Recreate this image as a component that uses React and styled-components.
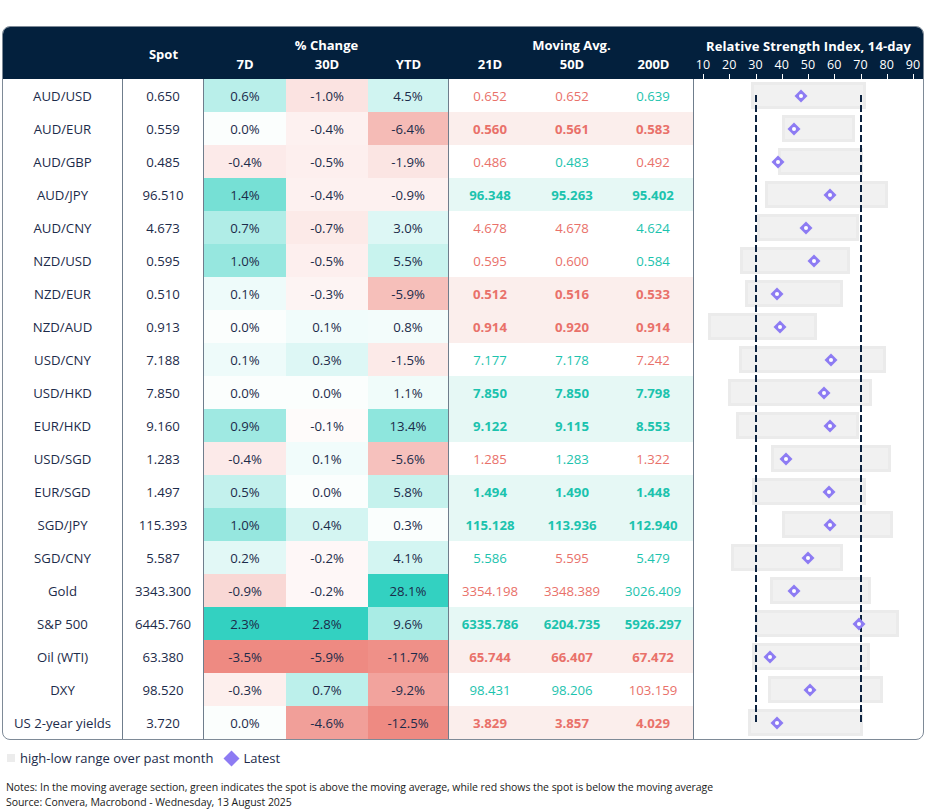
import styled, { createGlobalStyle } from 'styled-components';

const GlobalStyle = createGlobalStyle`
  * { box-sizing: border-box; }
  body {
    margin: 0;
    background: #fff;
    font-family: "Open Sans", "Noto Sans", sans-serif;
    color: #1c2b4a;
  }
`;

const COLS = [120, 81, 82, 82, 81, 82, 82, 81];
const RSI_W = 230;
const ROW_H = 33;
const rsiX = v => 9 + (v - 10) * 2.625;

const rows = [
  ['AUD/USD', '0.650', [0.6, -1.0, 4.5], ['0.652', '0.652', '0.639'], 'rrg', [28.3, 72.1, 47.3]],
  ['AUD/EUR', '0.559', [0.0, -0.4, -6.4], ['0.560', '0.561', '0.583'], 'rrr', [40.1, 67.9, 44.7]],
  ['AUD/GBP', '0.485', [-0.4, -0.5, -1.9], ['0.486', '0.483', '0.492'], 'rgr', [38.6, 71.0, 38.6]],
  ['AUD/JPY', '96.510', [1.4, -0.4, -0.9], ['96.348', '95.263', '95.402'], 'ggg', [33.6, 80.5, 58.4]],
  ['AUD/CNY', '4.673', [0.7, -0.7, 3.0], ['4.678', '4.678', '4.624'], 'rrg', [30.6, 69.4, 49.2]],
  ['NZD/USD', '0.595', [1.0, -0.5, 5.5], ['0.595', '0.600', '0.584'], 'rrg', [24.1, 66.0, 52.3]],
  ['NZD/EUR', '0.510', [0.1, -0.3, -5.9], ['0.512', '0.516', '0.533'], 'rrr', [26.0, 63.3, 38.2]],
  ['NZD/AUD', '0.913', [0.0, 0.1, 0.8], ['0.914', '0.920', '0.914'], 'rrr', [11.9, 53.4, 39.3]],
  ['USD/CNY', '7.188', [0.1, 0.3, -1.5], ['7.177', '7.178', '7.242'], 'ggr', [23.7, 79.7, 58.8]],
  ['USD/HKD', '7.850', [0.0, 0.0, 1.1], ['7.850', '7.850', '7.798'], 'ggg', [19.5, 74.4, 56.1]],
  ['EUR/HKD', '9.160', [0.9, -0.1, 13.4], ['9.122', '9.115', '8.553'], 'ggg', [22.6, 69.4, 58.4]],
  ['USD/SGD', '1.283', [-0.4, 0.1, -5.6], ['1.285', '1.283', '1.322'], 'rgr', [35.9, 81.6, 41.6]],
  ['EUR/SGD', '1.497', [0.5, 0.0, 5.8], ['1.494', '1.490', '1.448'], 'ggg', [28.7, 72.1, 58.0]],
  ['SGD/JPY', '115.393', [1.0, 0.4, 0.3], ['115.128', '113.936', '112.940'], 'ggg', [40.1, 82.4, 58.4]],
  ['SGD/CNY', '5.587', [0.2, -0.2, 4.1], ['5.586', '5.595', '5.479'], 'grg', [20.7, 63.3, 50.0]],
  ['Gold', '3343.300', [-0.9, -0.2, 28.1], ['3354.198', '3348.389', '3026.409'], 'rrg', [35.5, 74.0, 44.7]],
  ['S&P 500', '6445.760', [2.3, 2.8, 9.6], ['6335.786', '6204.735', '5926.297'], 'ggg', [29.8, 84.7, 69.4]],
  ['Oil (WTI)', '63.380', [-3.5, -5.9, -11.7], ['65.744', '66.407', '67.472'], 'rrr', [28.7, 73.6, 35.5]],
  ['DXY', '98.520', [-0.3, 0.7, -9.2], ['98.431', '98.206', '103.159'], 'ggr', [34.8, 78.6, 50.8]],
  ['US 2-year yields', '3.720', [0.0, -4.6, -12.5], ['3.829', '3.857', '4.029'], 'rrr', [27.1, 71.0, 38.2]],
];

// heat map scale per change column
const limits = [0, 1, 2].map(i => ({
  pos: Math.max(...rows.map(r => r[2][i])),
  neg: Math.min(...rows.map(r => r[2][i])),
}));

const mix = (rgb, t) =>
  `rgb(${rgb.map(c => Math.round(255 - (255 - c) * t)).join(',')})`;

const heat = (v, i) => {
  if (v === 0) return '#fbfefd';
  if (v > 0) return mix([51, 209, 193], Math.pow(v / limits[i].pos, 0.8));
  return mix([238, 138, 130], Math.pow(v / limits[i].neg, 0.8));
};

const Page = styled.div`
  padding: 26px 0 0 2px;
`;

const Card = styled.div`
  width: 922px;
  border: 1px solid #7e8a97;
  border-radius: 8px;
  overflow: hidden;
  display: flex;
  flex-direction: column;
`;

const HeaderBar = styled.div`
  display: flex;
  background: #03203d;
  color: #fff;
  height: 52px;
`;

const HeadGrid = styled.div`
  display: grid;
  grid-template-columns: ${COLS.map(c => c + 'px').join(' ')};
  grid-template-rows: 20px 18px;
  padding-top: 8px;
  font-weight: 700;
  font-size: 13px;
`;

const HeadCell = styled.div`
  grid-column: ${p => p.$col} / span ${p => p.$span || 1};
  grid-row: ${p => p.$row} / span ${p => p.$rows || 1};
  display: flex;
  align-items: center;
  justify-content: center;
  white-space: nowrap;
`;

const RsiHead = styled.div`
  width: ${RSI_W}px;
  display: flex;
  flex-direction: column;
`;

const RsiTitle = styled.div`
  margin-top: 9px;
  height: 20px;
  line-height: 20px;
  text-align: center;
  font-weight: 700;
  font-size: 13px;
  letter-spacing: 0.1px;
  white-space: nowrap;
`;

const Axis = styled.div`
  position: relative;
  flex: 1;
`;

const AxisLabel = styled.span`
  position: absolute;
  top: 0;
  transform: translateX(-50%);
  font-size: 12.5px;
  line-height: 18px;
`;

const Tick = styled.span`
  position: absolute;
  bottom: 0;
  width: 1px;
  height: 5px;
  background: #fff;
`;

const Body = styled.div`
  display: flex;
`;

const Rows = styled.div`
  display: flex;
  flex-direction: column;
`;

const Row = styled.div`
  display: grid;
  grid-template-columns: ${COLS.map(c => c + 'px').join(' ')};
  height: ${ROW_H}px;
`;

const Cell = styled.div`
  display: flex;
  align-items: center;
  justify-content: center;
  font-size: 13.2px;
  white-space: nowrap;
  border-right: ${p => (p.$line ? '1px solid #6f7d8c' : 'none')};
`;

const ChangeCell = styled(Cell)`
  background: ${p => p.$bg};
`;

const MaCell = styled(Cell)`
  color: ${p => (p.$up ? '#1cc3ae' : '#e9716a')};
  font-weight: ${p => (p.$strong ? 700 : 400)};
  background: ${p => (p.$strong ? (p.$up ? '#e6f8f5' : '#fbeeec') : '#fff')};
`;

const RsiBody = styled.div`
  position: relative;
  width: ${RSI_W}px;
`;

const RsiRow = styled.div`
  position: relative;
  height: ${ROW_H}px;
`;

const Range = styled.div`
  position: absolute;
  top: 3px;
  height: 27px;
  background: #f1f1f1;
  box-shadow: inset 0 0 0 3px #ebebeb;
`;

const Marker = styled.svg`
  position: absolute;
  top: 50%;
  width: 14px;
  height: 14px;
  margin: -7px 0 0 -7px;
  z-index: 2;
`;

const DashLine = styled.div`
  position: absolute;
  top: 16px;
  bottom: 16px;
  width: 2px;
  margin-left: -1px;
  z-index: 1;
  background: repeating-linear-gradient(to bottom, #0d2340 0 7px, transparent 7px 10px);
`;

const Legend = styled.div`
  display: flex;
  align-items: center;
  margin: 9px 0 0 5px;
  font-size: 13px;
  line-height: 18px;
  color: #1c2b4a;
`;

const LegendSwatch = styled.span`
  width: 8px;
  height: 8px;
  background: #ececec;
  margin-right: 5px;
`;

const LegendDiamond = styled.svg`
  width: 17px;
  height: 17px;
  margin: 0 3px 0 10px;
`;

const Notes = styled.div`
  margin: 13px 0 0 4px;
  font-size: 10.5px;
  letter-spacing: -0.05px;
  line-height: 15px;
  color: #1a1a1a;
`;

function Diamond() {
  return (
    <>
      <polygon points="7,0.5 13.5,7 7,13.5 0.5,7" fill="#8d7bf3" />
      <circle cx="7" cy="7" r="2" fill="#fff" />
    </>
  );
}

export default function App() {
  const ticks = [10, 20, 30, 40, 50, 60, 70, 80, 90];
  return (
    <Page>
      <GlobalStyle />
      <Card>
        <HeaderBar>
          <HeadGrid>
            <HeadCell $col={2} $row={1} $rows={2}>Spot</HeadCell>
            <HeadCell $col={3} $span={3} $row={1}>% Change</HeadCell>
            <HeadCell $col={3} $row={2}>7D</HeadCell>
            <HeadCell $col={4} $row={2}>30D</HeadCell>
            <HeadCell $col={5} $row={2}>YTD</HeadCell>
            <HeadCell $col={6} $span={3} $row={1}>Moving Avg.</HeadCell>
            <HeadCell $col={6} $row={2}>21D</HeadCell>
            <HeadCell $col={7} $row={2}>50D</HeadCell>
            <HeadCell $col={8} $row={2}>200D</HeadCell>
          </HeadGrid>
          <RsiHead>
            <RsiTitle>Relative Strength Index, 14-day</RsiTitle>
            <Axis>
              {ticks.map(t => (
                <span key={t}>
                  <AxisLabel style={{ left: rsiX(t) }}>{t}</AxisLabel>
                  <Tick style={{ left: rsiX(t) }} />
                </span>
              ))}
            </Axis>
          </RsiHead>
        </HeaderBar>
        <Body>
          <Rows>
            {rows.map(([name, spot, chg, ma, dir]) => {
              const strong = dir === 'ggg' || dir === 'rrr';
              return (
                <Row key={name}>
                  <Cell $line>{name}</Cell>
                  <Cell $line>{spot}</Cell>
                  {chg.map((v, i) => (
                    <ChangeCell key={i} $bg={heat(v, i)} $line={i === 2}>
                      {v.toFixed(1)}%
                    </ChangeCell>
                  ))}
                  {ma.map((v, i) => (
                    <MaCell key={i} $up={dir[i] === 'g'} $strong={strong} $line={i === 2}>
                      {v}
                    </MaCell>
                  ))}
                </Row>
              );
            })}
          </Rows>
          <RsiBody>
            {rows.map(([name, , , , , [lo, hi, last]]) => (
              <RsiRow key={name}>
                <Range style={{ left: rsiX(lo), width: rsiX(hi) - rsiX(lo) }} />
                <Marker viewBox="0 0 14 14" style={{ left: rsiX(last) }}>
                  <Diamond />
                </Marker>
              </RsiRow>
            ))}
            <DashLine style={{ left: rsiX(30) }} />
            <DashLine style={{ left: rsiX(70) }} />
          </RsiBody>
        </Body>
      </Card>
      <Legend>
        <LegendSwatch />
        high-low range over past month
        <LegendDiamond viewBox="0 0 17 17">
          <polygon points="8.5,0.5 16.5,8.5 8.5,16.5 0.5,8.5" fill="#8d7bf3" />
        </LegendDiamond>
        Latest
      </Legend>
      <Notes>
        <div>
          Notes: In the moving average section, green indicates the spot is above the moving
          average, while red shows the spot is below the moving average
        </div>
        <div>Source: Convera, Macrobond - Wednesday, 13 August 2025</div>
      </Notes>
    </Page>
  );
}
